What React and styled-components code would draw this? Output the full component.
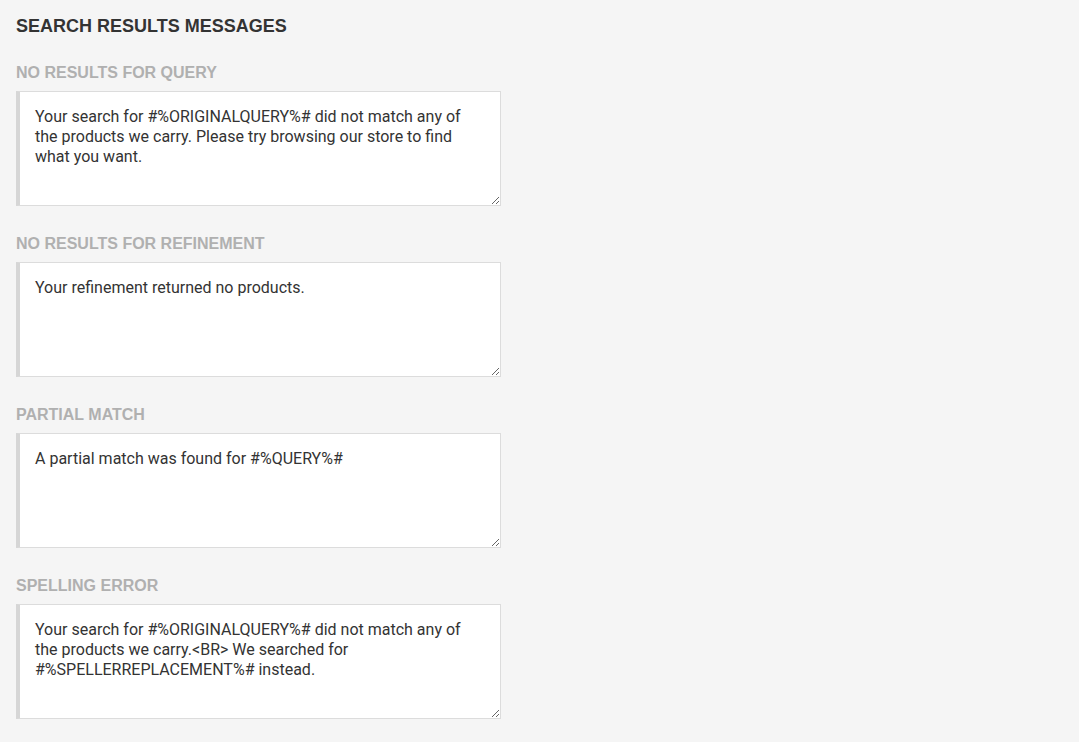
import React from 'react';
import styled, { createGlobalStyle } from 'styled-components';

const GlobalStyle = createGlobalStyle`
  html, body {
    margin: 0;
    background: #f5f5f5;
  }
`;

const Page = styled.div`
  padding: 16px 16px 24px 16px;
  display: flex;
  flex-direction: column;
  font-family: "Liberation Sans", Arial, sans-serif;
`;

const Heading = styled.h2`
  margin: 0 0 26px 0;
  font-size: 18px;
  line-height: 21px;
  font-weight: bold;
  color: #333;
`;

const Section = styled.div`
  display: flex;
  flex-direction: column;
  margin-bottom: 28px;
`;

const Label = styled.label`
  font-size: 16px;
  line-height: 19px;
  font-weight: bold;
  color: #b0b0b0;
  margin-bottom: 9px;
`;

const MessageBox = styled.textarea`
  box-sizing: border-box;
  width: 485px;
  height: 115px;
  margin: 0;
  padding: 15px 15px 13px 15px;
  border: 1px solid #dcdcdc;
  border-left: 4px solid #d6d6d6;
  border-radius: 0;
  background: #fff;
  color: #333;
  font-family: Roboto, "Liberation Sans", sans-serif;
  font-size: 16px;
  line-height: 20px;
  resize: vertical;
  outline: none;
`;

const messages = [
  {
    id: 'query',
    label: 'NO RESULTS FOR QUERY',
    text: 'Your search for #%ORIGINALQUERY%# did not match any of the products we carry. Please try browsing our store to find what you want.',
  },
  {
    id: 'refinement',
    label: 'NO RESULTS FOR REFINEMENT',
    text: 'Your refinement returned no products.',
  },
  {
    id: 'partial',
    label: 'PARTIAL MATCH',
    text: 'A partial match was found for #%QUERY%#',
  },
  {
    id: 'spelling',
    label: 'SPELLING ERROR',
    text: 'Your search for #%ORIGINALQUERY%# did not match any of the products we carry.<BR> We searched for #%SPELLERREPLACEMENT%# instead.',
  },
];

const App = () => (
  <>
    <GlobalStyle />
    <Page>
      <Heading>SEARCH RESULTS MESSAGES</Heading>
      {messages.map((m) => (
        <Section key={m.id}>
          <Label htmlFor={m.id}>{m.label}</Label>
          <MessageBox id={m.id} defaultValue={m.text} />
        </Section>
      ))}
    </Page>
  </>
);

export default App;
